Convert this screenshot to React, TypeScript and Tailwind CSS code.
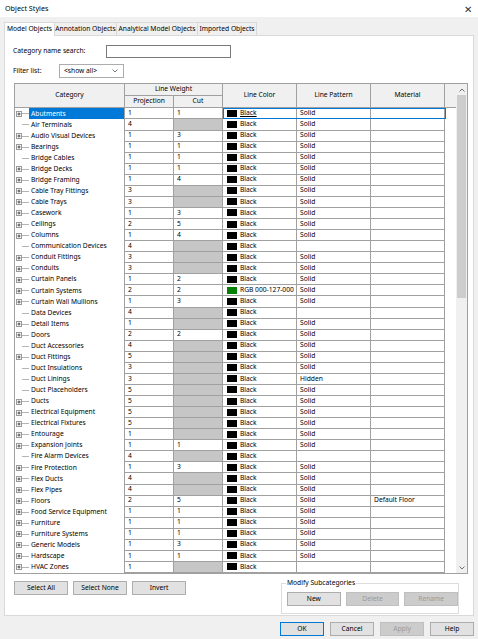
import React from "react";

type Row = [string, boolean, string, string | null, string, string, string];

const rows: Row[] = [
  ["Abutments", true, "1", "1", "Black", "Solid", ""],
  ["Air Terminals", false, "4", null, "Black", "Solid", ""],
  ["Audio Visual Devices", true, "1", "3", "Black", "Solid", ""],
  ["Bearings", true, "1", "1", "Black", "Solid", ""],
  ["Bridge Cables", false, "1", "1", "Black", "Solid", ""],
  ["Bridge Decks", true, "1", "1", "Black", "Solid", ""],
  ["Bridge Framing", true, "1", "4", "Black", "Solid", ""],
  ["Cable Tray Fittings", true, "3", null, "Black", "Solid", ""],
  ["Cable Trays", true, "3", null, "Black", "Solid", ""],
  ["Casework", true, "1", "3", "Black", "Solid", ""],
  ["Ceilings", true, "2", "5", "Black", "Solid", ""],
  ["Columns", true, "1", "4", "Black", "Solid", ""],
  ["Communication Devices", false, "4", null, "Black", "", ""],
  ["Conduit Fittings", true, "3", null, "Black", "Solid", ""],
  ["Conduits", true, "3", null, "Black", "Solid", ""],
  ["Curtain Panels", true, "1", "2", "Black", "Solid", ""],
  ["Curtain Systems", true, "2", "2", "RGB 000-127-000", "Solid", ""],
  ["Curtain Wall Mullions", true, "1", "3", "Black", "Solid", ""],
  ["Data Devices", false, "4", null, "Black", "", ""],
  ["Detail Items", true, "1", null, "Black", "Solid", ""],
  ["Doors", true, "2", "2", "Black", "Solid", ""],
  ["Duct Accessories", false, "4", null, "Black", "Solid", ""],
  ["Duct Fittings", true, "5", null, "Black", "Solid", ""],
  ["Duct Insulations", false, "3", null, "Black", "Solid", ""],
  ["Duct Linings", false, "3", null, "Black", "Hidden", ""],
  ["Duct Placeholders", false, "5", null, "Black", "Solid", ""],
  ["Ducts", true, "5", null, "Black", "Solid", ""],
  ["Electrical Equipment", true, "5", null, "Black", "Solid", ""],
  ["Electrical Fixtures", true, "5", null, "Black", "Solid", ""],
  ["Entourage", true, "1", null, "Black", "Solid", ""],
  ["Expansion Joints", true, "1", "1", "Black", "Solid", ""],
  ["Fire Alarm Devices", false, "4", null, "Black", "", ""],
  ["Fire Protection", true, "1", "3", "Black", "Solid", ""],
  ["Flex Ducts", true, "4", null, "Black", "Solid", ""],
  ["Flex Pipes", true, "4", null, "Black", "Solid", ""],
  ["Floors", true, "2", "5", "Black", "Solid", "Default Floor"],
  ["Food Service Equipment", true, "1", "1", "Black", "Solid", ""],
  ["Furniture", true, "1", "1", "Black", "Solid", ""],
  ["Furniture Systems", true, "1", "1", "Black", "Solid", ""],
  ["Generic Models", true, "1", "3", "Black", "Solid", ""],
  ["Hardscape", true, "1", "1", "Black", "Solid", ""],
  ["HVAC Zones", true, "1", null, "Black", "", ""],
];

function Expander() {
  return (
    <svg width="6" height="6" viewBox="0 0 6 6" className="shrink-0">
      <rect x="0.5" y="0.5" width="5" height="5" fill="#fff" stroke="#9a9a9a" />
      <line x1="1.5" y1="3" x2="4.5" y2="3" stroke="#444" />
      <line x1="3" y1="1.5" x2="3" y2="4.5" stroke="#444" />
    </svg>
  );
}

function Btn({ label, disabled, primary, w }: { label: string; disabled?: boolean; primary?: boolean; w: string }) {
  return (
    <div
      className={`${w} h-[14px] flex items-center justify-center border ${
        disabled
          ? "bg-[#cccccc] border-[#bfbfbf] text-[#9a9a9a]"
          : primary
          ? "bg-[#e1e1e1] border-[#0078d7] text-black"
          : "bg-[#e1e1e1] border-[#adadad] text-black"
      }`}
    >
      {label}
    </div>
  );
}

export default function App() {
  return (
    <div
      className="w-[478px] h-[639px] bg-[#f0f0f0] text-black text-[6.7px] leading-none overflow-hidden whitespace-nowrap"
      style={{ fontFamily: '"Noto Sans", "Open Sans", sans-serif' }}
    >
      {/* title bar */}
      <div className="h-[17px] bg-white flex items-center justify-between pl-[5px] pr-[6px]">
        <span className="text-[7.2px]">Object Styles</span>
        <span className="text-[10px] text-[#333] font-light">✕</span>
      </div>

      {/* tabs */}
      <div className="flex items-end pl-[4px] pt-[4px] h-[18px]">
        <div className="h-[14px] w-[51px] bg-white border border-b-0 border-[#d9d9d9] flex items-center justify-center relative top-[1px] z-10">
          Model Objects
        </div>
        <div className="h-[13px] w-[62px] border border-l-0 border-b-0 border-[#d9d9d9] flex items-center justify-center">
          Annotation Objects
        </div>
        <div className="h-[13px] w-[81px] border border-l-0 border-b-0 border-[#d9d9d9] flex items-center justify-center">
          Analytical Model Objects
        </div>
        <div className="h-[13px] w-[59px] border border-l-0 border-b-0 border-[#d9d9d9] flex items-center justify-center">
          Imported Objects
        </div>
      </div>

      {/* panel */}
      <div className="ml-[4px] w-[470px] h-[581px] bg-white border border-[#d9d9d9] flex flex-col pl-[8px]">
        <div className="flex items-center mt-[9px] h-[13px]">
          <span className="w-[93px]">Category name search:</span>
          <div className="w-[125px] h-[13px] border border-[#7a7a7a] bg-white" />
        </div>
        <div className="flex items-center mt-[6px] h-[14px]">
          <span className="w-[46px]">Filter list:</span>
          <div className="w-[65px] h-[14px] border border-[#adadad] bg-white flex items-center justify-between pl-[4px] pr-[5px]">
            <span>&lt;show all&gt;</span>
            <svg width="6" height="4" viewBox="0 0 6 4">
              <path d="M0.5 0.5 L3 3 L5.5 0.5" fill="none" stroke="#555" strokeWidth="0.8" />
            </svg>
          </div>
        </div>

        {/* table */}
        <div className="mt-[5px] ml-[1px] w-[454px] h-[491px] border border-[#a0a0a0] flex">
          <div className="flex flex-col w-[443px]">
            {/* header */}
            <div className="flex h-[25px] bg-[#f0f0f0] border-b border-[#a0a0a0]">
              <div className="w-[110px] border-r border-[#a0a0a0] flex items-center justify-center">Category</div>
              <div className="w-[98px] border-r border-[#a0a0a0] flex flex-col">
                <div className="h-[12px] border-b border-[#a0a0a0] flex items-center justify-center">Line Weight</div>
                <div className="flex flex-1">
                  <div className="w-[49px] border-r border-[#a0a0a0] flex items-center justify-center">Projection</div>
                  <div className="flex-1 flex items-center justify-center">Cut</div>
                </div>
              </div>
              <div className="w-[74px] border-r border-[#a0a0a0] flex items-center justify-center">Line Color</div>
              <div className="w-[74px] border-r border-[#a0a0a0] flex items-center justify-center">Line Pattern</div>
              <div className="w-[74px] border-r border-[#a0a0a0] flex items-center justify-center">Material</div>
              <div className="flex-1" />
            </div>
            {/* body */}
            <div className="flex flex-col">
              {rows.map((r, i) => {
                const [name, exp, proj, cut, color, pattern, mat] = r;
                const sel = i === 0;
                return (
                  <div key={name} className="flex h-[11.07px] relative">
                    <div className="w-[110px] flex items-center border-r border-[#a0a0a0]">
                      <div className="w-[14px] flex items-center pl-[1px] h-full">
                        {exp ? (
                          <>
                            <Expander />
                            <div className="w-[8px] border-t border-[#b4b4b4]" />
                          </>
                        ) : (
                          <div className="ml-[6px] w-[8px] border-t border-[#b4b4b4]" />
                        )}
                      </div>
                      <div
                        className={`flex-1 h-full flex items-center pl-[2px] ${
                          sel ? "bg-[#0078d7] text-white" : ""
                        }`}
                      >
                        {name}
                      </div>
                    </div>
                    <div className="w-[49px] border-r border-b border-[#a0a0a0] flex items-center pl-[3px]">{proj}</div>
                    <div
                      className={`w-[49px] border-r border-b border-[#a0a0a0] flex items-center pl-[3px] ${
                        cut === null ? "bg-[#c6c6c6]" : ""
                      }`}
                    >
                      {cut ?? ""}
                    </div>
                    <div className="w-[74px] border-r border-b border-[#a0a0a0] flex items-center pl-[4px] gap-[3px]">
                      <div
                        className={`w-[10px] h-[7px] shrink-0 ${color === "Black" ? "bg-black" : "bg-[#007f00]"}`}
                      />
                      <span className={sel ? "underline" : ""}>{color}</span>
                    </div>
                    <div className="w-[74px] border-r border-b border-[#a0a0a0] flex items-center pl-[3px]">{pattern}</div>
                    <div className="w-[74px] border-r border-b border-[#a0a0a0] flex items-center pl-[3px]">{mat}</div>
                    <div className="flex-1" />
                    {sel && (
                      <div className="absolute left-[208px] top-0 w-[223px] h-full border border-[#0078d7] pointer-events-none" />
                    )}
                  </div>
                );
              })}
            </div>
          </div>
          {/* scrollbar */}
          <div className="w-[11px] flex flex-col bg-[#f0f0f0]">
            <div className="h-[11px] flex items-center justify-center">
              <svg width="6" height="4" viewBox="0 0 6 4">
                <path d="M0.5 3.5 L3 1 L5.5 3.5" fill="none" stroke="#606060" strokeWidth="0.9" />
              </svg>
            </div>
            <div className="h-[203px] mx-[1px] bg-[#cdcdcd]" />
            <div className="flex-1" />
            <div className="h-[11px] flex items-center justify-center">
              <svg width="6" height="4" viewBox="0 0 6 4">
                <path d="M0.5 0.5 L3 3 L5.5 0.5" fill="none" stroke="#606060" strokeWidth="0.9" />
              </svg>
            </div>
          </div>
        </div>

        {/* bottom of panel */}
        <div className="flex mt-[6px] ml-[1px]">
          <div className="flex gap-[5px] pt-[1px]">
            <Btn label="Select All" w="w-[54px]" />
            <Btn label="Select None" w="w-[54px]" />
            <Btn label="Invert" w="w-[54px]" />
          </div>
          <div className="ml-[95px] mt-[3px] w-[178px] h-[31px] border border-[#dcdcdc] relative flex items-end gap-[5px] pl-[5px] pb-[7px]">
            <span className="absolute left-[4px] top-[-4px] bg-white px-[1px]">Modify Subcategories</span>
            <Btn label="New" w="w-[54px]" />
            <Btn label="Delete" disabled w="w-[54px]" />
            <Btn label="Rename" disabled w="w-[54px]" />
          </div>
        </div>
      </div>

      {/* footer */}
      <div className="flex justify-end gap-[6px] pr-[4px] mt-[6px]">
        <Btn label="OK" primary w="w-[44px]" />
        <Btn label="Cancel" w="w-[44px]" />
        <Btn label="Apply" disabled w="w-[44px]" />
        <Btn label="Help" w="w-[44px]" />
      </div>
    </div>
  );
}
